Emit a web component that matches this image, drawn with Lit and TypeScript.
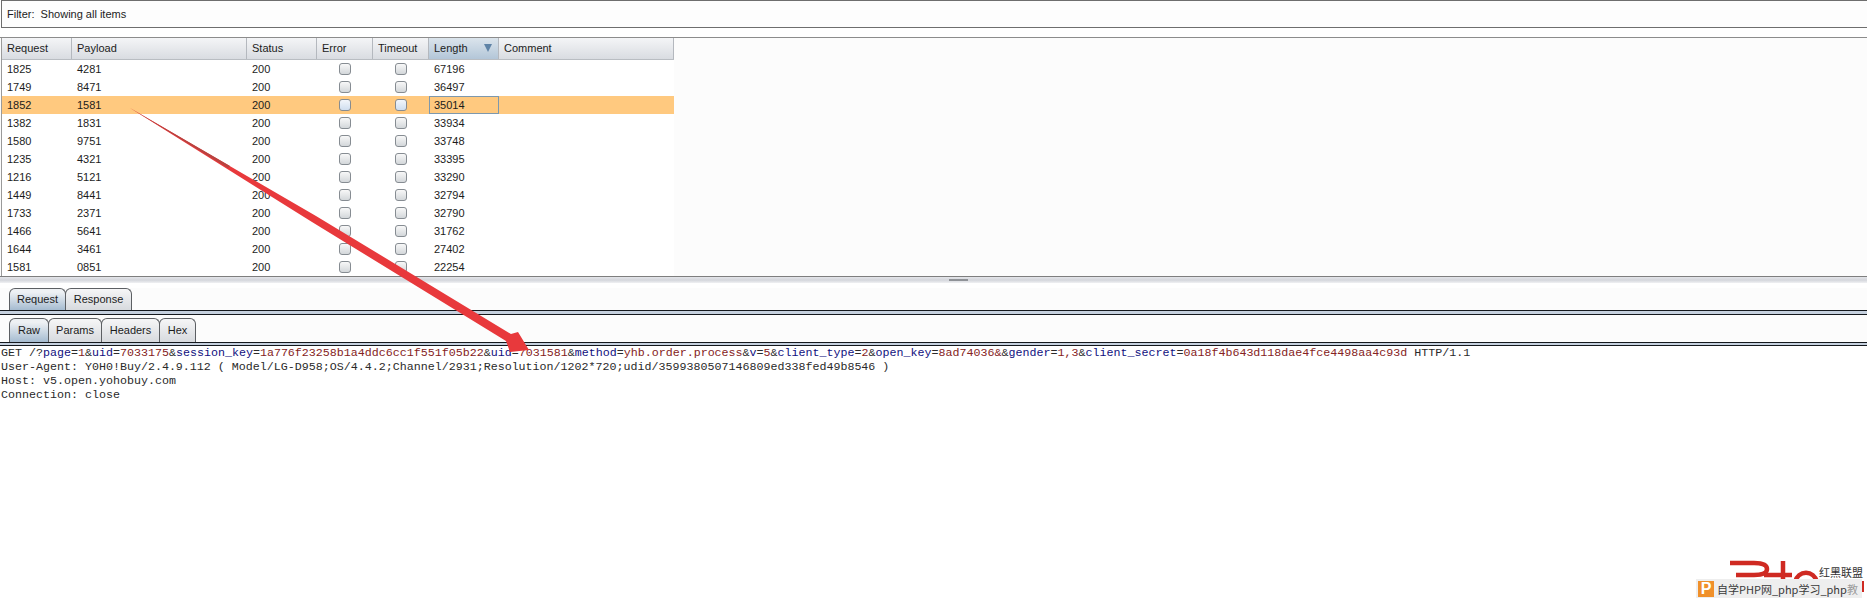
import { LitElement, html, css, svg } from "lit";
import { customElement } from "lit/decorators.js";

const ROWS = [
  ["1825", "4281", "67196"],
  ["1749", "8471", "36497"],
  ["1852", "1581", "35014"],
  ["1382", "1831", "33934"],
  ["1580", "9751", "33748"],
  ["1235", "4321", "33395"],
  ["1216", "5121", "33290"],
  ["1449", "8441", "32794"],
  ["1733", "2371", "32790"],
  ["1466", "5641", "31762"],
  ["1644", "3461", "27402"],
  ["1581", "0851", "22254"],
];

const PARAMS: [string, string][] = [
  ["page", "1"],
  ["uid", "7033175"],
  ["session_key", "1a776f23258b1a4ddc6cc1f551f05b22"],
  ["uid", "7031581"],
  ["method", "yhb.order.process"],
  ["v", "5"],
  ["client_type", "2"],
  ["open_key", "8ad74036&"],
  ["gender", "1,3"],
  ["client_secret", "0a18f4b643d118dae4fce4498aa4c93d"],
];

@customElement("app-root")
export class AppRoot extends LitElement {
  static styles = css`
    :host {
      display: block;
      position: relative;
      width: 1867px;
      height: 603px;
      overflow: hidden;
      background: #fff;
      font-family: "Liberation Sans", Arial, sans-serif;
      font-size: 11px;
      color: #1c1c1c;
    }
    .filter {
      box-sizing: border-box;
      height: 28px;
      margin: 0 -2px 9px 1px;
      padding-left: 5px;
      display: flex;
      align-items: center;
      border: 1px solid #6e6e6e;
      background: #fdfdfd;
      white-space: pre;
    }
    .results {
      box-sizing: border-box;
      height: 240px;
      background: #fcfcfc;
      border-top: 1px solid #8c8c8c;
      border-bottom: 1px solid #7e7e7e;
    }
    .table {
      width: 672px;
      margin-left: 1px;
      border-left: 1px solid #9a9a9a;
      background: #fff;
    }
    .row,
    .head {
      display: grid;
      grid-template-columns: 70px 175px 70px 56px 56px 70px 175px;
    }
    .head {
      height: 21px;
      border-bottom: 1px solid #b9bdc2;
      box-sizing: content-box;
      background: linear-gradient(#f4f5f7, #d9dce1);
    }
    .head > div {
      display: flex;
      align-items: center;
      justify-content: space-between;
      padding: 0 6px 2px 5px;
      border-right: 1px solid #b4b8be;
    }
    .head > .sorted {
      background: linear-gradient(#dbe4ec, #b3c6d8);
    }
    .tri {
      width: 0;
      height: 0;
      border-left: 4px solid transparent;
      border-right: 4px solid transparent;
      border-top: 8px solid #5f83a6;
    }
    .row {
      height: 18px;
    }
    .row.sel {
      background: #ffc97f;
    }
    .row > div {
      display: flex;
      align-items: center;
      padding-left: 5px;
      min-width: 0;
    }
    .row > .c {
      justify-content: center;
      padding-left: 0;
    }
    .row > .focus {
      box-sizing: border-box;
      border: 1px solid #7d98ad;
      padding-left: 4px;
    }
    .box {
      box-sizing: border-box;
      width: 12px;
      height: 12px;
      border: 1px solid #868c92;
      border-radius: 3px;
      background: linear-gradient(#f8f8f8, #d3d7da);
    }
    .sel .box {
      background: linear-gradient(#f2f6fb, #cfdeef);
    }
    .splitter {
      height: 6px;
      display: flex;
      justify-content: center;
      background: linear-gradient(#e4e5e9, #d4d6dc 50%, #f0f1f3);
      padding-left: 49px;
      box-sizing: border-box;
      margin-bottom: 5px;
    }
    .grip {
      width: 19px;
      height: 2px;
      margin-top: 2px;
      background: #8f9297;
    }
    .strip {
      display: flex;
      padding-left: 9px;
      background: #fcfcfc;
    }
    .strip.outer {
      height: 22px;
    }
    .strip.inner {
      height: 24px;
      padding-top: 3px;
    }
    .tab {
      box-sizing: border-box;
      display: flex;
      align-items: center;
      justify-content: center;
      padding-bottom: 2px;
      border: 1px solid #5c5f63;
      border-bottom: 0;
      border-radius: 6px 6px 0 0;
      background: linear-gradient(#f6f6f7, #d7dade);
      margin-right: -1px;
    }
    .tab.on {
      background: linear-gradient(#eef1f4 15%, #a5bbd0);
    }
    .rule {
      height: 3px;
      background: #c5d0de;
      border-top: 1px solid #14181d;
      border-bottom: 1px solid #14181d;
    }
    .rule.thin {
      height: 2px;
    }
    .raw {
      font-family: "Liberation Mono", "Courier New", monospace;
      font-size: 11.67px;
      line-height: 14px;
      padding: 0 0 0 1px;
      white-space: pre;
      color: #2a2a2a;
    }
    .k {
      color: #101080;
    }
    .v {
      color: #852222;
    }
    .arrow {
      position: absolute;
      left: 0;
      top: 0;
      pointer-events: none;
    }
    .mark {
      position: absolute;
      left: 1696px;
      top: 555px;
      width: 171px;
      height: 45px;
    }
    .mark svg {
      position: absolute;
      left: 0;
      top: 0;
    }
    .lm {
      position: absolute;
      left: 123px;
      top: 11px;
      font-family: "Noto Sans CJK SC", sans-serif;
      font-size: 11px;
      line-height: 13px;
      color: #333;
      white-space: nowrap;
    }
    .bar {
      position: absolute;
      left: 0;
      top: 24px;
      width: 166px;
      height: 19px;
      display: flex;
      align-items: center;
      gap: 3px;
      padding-left: 2px;
      box-sizing: border-box;
      overflow: hidden;
      background: #eeeeee;
      font-family: "Noto Sans CJK SC", sans-serif;
      font-size: 11px;
      color: #3a3a3a;
      white-space: nowrap;
    }
    .p {
      flex: none;
      width: 16px;
      height: 16px;
      display: flex;
      align-items: center;
      justify-content: center;
      background: #f0902a;
      color: #fff;
      font-family: "Liberation Sans", sans-serif;
      font-weight: bold;
      font-size: 16px;
    }
    .fade {
      color: #9a9a9a;
    }
  `;

  private head(label: string, w?: boolean) {
    return html`<div class=${w ? "sorted" : ""}>${label}${w ? html`<span class="tri"></span>` : ""}</div>`;
  }

  render() {
    const query = PARAMS.map(
      ([k, v], i) =>
        html`${i ? "&" : ""}<span class="k">${k}</span>=<span class="v">${v}</span>`
    );
    return html`
      <div class="filter">Filter:  Showing all items</div>
      <div class="results">
        <div class="table">
          <div class="head">
            ${this.head("Request")}${this.head("Payload")}${this.head("Status")}${this.head("Error")}${this.head("Timeout")}${this.head("Length", true)}${this.head("Comment")}
          </div>
          ${ROWS.map(
            (r, i) => html`
              <div class="row ${i === 2 ? "sel" : ""}">
                <div>${r[0]}</div>
                <div>${r[1]}</div>
                <div>200</div>
                <div class="c"><span class="box"></span></div>
                <div class="c"><span class="box"></span></div>
                <div class=${i === 2 ? "focus" : ""}>${r[2]}</div>
                <div></div>
              </div>
            `
          )}
        </div>
      </div>
      <div class="splitter"><div class="grip"></div></div>
      <div class="strip outer">
        <div class="tab on" style="width:57px">Request</div>
        <div class="tab" style="width:67px">Response</div>
      </div>
      <div class="rule"></div>
      <div class="strip inner">
        <div class="tab on" style="width:40px">Raw</div>
        <div class="tab" style="width:54px">Params</div>
        <div class="tab" style="width:59px">Headers</div>
        <div class="tab" style="width:37px">Hex</div>
      </div>
      <div class="rule thin"></div>
      <div class="raw">GET /?${query} HTTP/1.1
User-Agent: Y0H0!Buy/2.4.9.112 ( Model/LG-D958;OS/4.4.2;Channel/2931;Resolution/1202*720;udid/3599380507146809ed338fed49b8546 )
Host: v5.open.yohobuy.com
Connection: close</div>

      <svg class="arrow" width="1867" height="603">
        <polygon
          points="130,108 316,216 511,334 518,332 529,350 510,352 506,341 312,222"
          fill="#e8393c"
        />
        <polygon points="130,108 230,166 228,168" fill="#b8433f" />
      </svg>

      <div class="mark">
        <svg width="171" height="45">
          ${svg`
            <g fill="none" stroke="#cf2a22" stroke-width="4.5">
              <path d="M34 8 H58 Q71 8 71 14 Q71 20 58 20 H40" />
              <path d="M68 20 H96" />
              <path d="M87 6 V28" />
              <path d="M99 27 A11.5 13 0 0 1 121 27" />
            </g>
            <rect x="166" y="26" width="2" height="11" fill="#cf2a22" />
          `}
        </svg>
        <div class="lm">红黑联盟</div>
        <div class="bar"><span class="p">P</span><span>自学PHP网_php学习_php<span class="fade">教</span></span></div>
      </div>
    `;
  }
}
